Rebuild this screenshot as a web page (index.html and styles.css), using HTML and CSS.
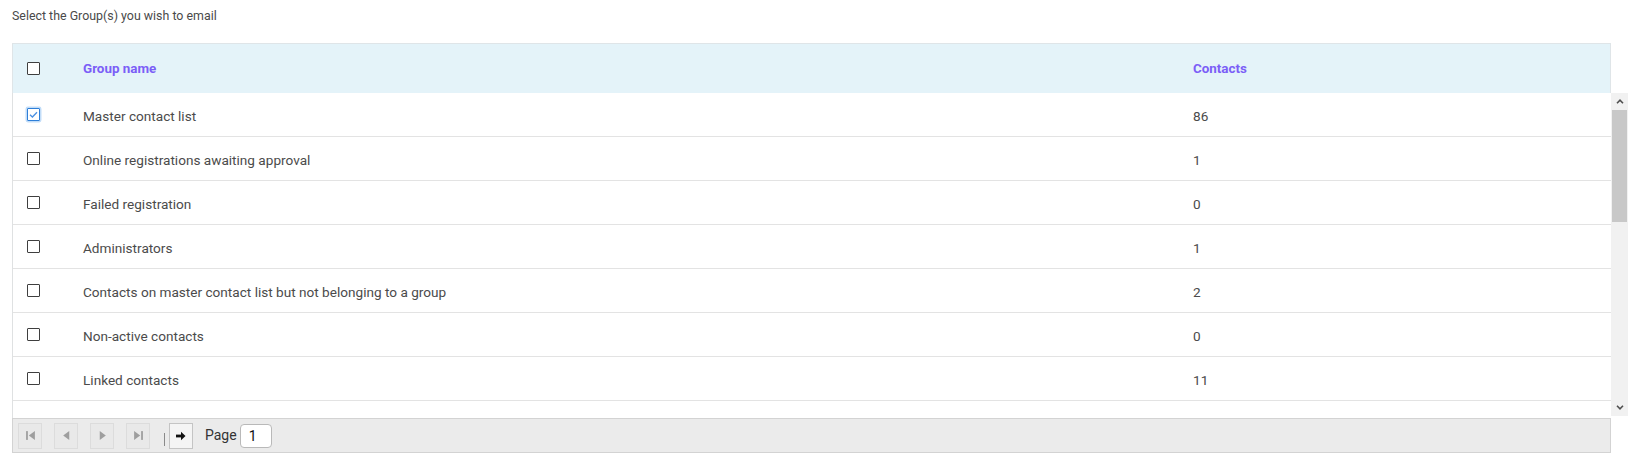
FILE: index.html
```html
<!DOCTYPE html>
<html>
<head>
<meta charset="utf-8">
<link rel="stylesheet" href="styles.css">
</head>
<body>
<div class="page">
  <div class="title">Select the Group(s) you wish to email</div>
  <div class="grid">
    <div class="grid-header">
      <div class="cell cb-cell"><span class="cb"></span></div>
      <div class="cell th">Group name</div>
      <div class="cell th">Contacts</div>
    </div>
    <div class="grid-body">
      <div class="rows">
        <div class="row"><div class="cell cb-cell"><span class="cb checked"><svg viewBox="0 0 13 13" width="13" height="13"><path d="M3 6.8 L5.4 9 L10 4.2" fill="none" stroke="#4a90e2" stroke-width="1.3"/></svg></span></div><div class="cell">Master contact list</div><div class="cell">86</div></div>
        <div class="row"><div class="cell cb-cell"><span class="cb"></span></div><div class="cell">Online registrations awaiting approval</div><div class="cell">1</div></div>
        <div class="row"><div class="cell cb-cell"><span class="cb"></span></div><div class="cell">Failed registration</div><div class="cell">0</div></div>
        <div class="row"><div class="cell cb-cell"><span class="cb"></span></div><div class="cell">Administrators</div><div class="cell">1</div></div>
        <div class="row"><div class="cell cb-cell"><span class="cb"></span></div><div class="cell">Contacts on master contact list but not belonging to a group</div><div class="cell">2</div></div>
        <div class="row"><div class="cell cb-cell"><span class="cb"></span></div><div class="cell">Non-active contacts</div><div class="cell">0</div></div>
        <div class="row"><div class="cell cb-cell"><span class="cb"></span></div><div class="cell">Linked contacts</div><div class="cell">11</div></div>
      </div>
      <div class="vscroll">
        <div class="sb-btn"><svg viewBox="0 0 8 5" width="8" height="5"><path d="M1 4.2 L4 1.2 L7 4.2" fill="none" stroke="#505050" stroke-width="1.6"/></svg></div>
        <div class="sb-track"><div class="sb-thumb"></div></div>
        <div class="sb-btn"><svg viewBox="0 0 8 5" width="8" height="5"><path d="M1 0.8 L4 3.8 L7 0.8" fill="none" stroke="#505050" stroke-width="1.6"/></svg></div>
      </div>
    </div>
    <div class="pager">
      <span class="pbtn disabled"><svg viewBox="0 0 10 10" width="11" height="11"><rect x="1" y="1" width="1.6" height="8" fill="#9e9e9e"/><path d="M9 1 L3.5 5 L9 9 Z" fill="#9e9e9e"/></svg></span>
      <span class="pbtn disabled"><svg viewBox="0 0 10 10" width="11" height="11"><path d="M7.5 1 L2 5 L7.5 9 Z" fill="#9e9e9e"/></svg></span>
      <span class="pbtn disabled"><svg viewBox="0 0 10 10" width="11" height="11"><path d="M2.5 1 L8 5 L2.5 9 Z" fill="#9e9e9e"/></svg></span>
      <span class="pbtn disabled"><svg viewBox="0 0 10 10" width="11" height="11"><path d="M1 1 L6.5 5 L1 9 Z" fill="#9e9e9e"/><rect x="7.4" y="1" width="1.6" height="8" fill="#9e9e9e"/></svg></span>
      <span class="psep"></span>
      <span class="pbtn go"><svg viewBox="0 0 12 10" width="12" height="10"><rect x="1" y="3.6" width="5.5" height="2.8" fill="#111"/><path d="M6 0.8 L10.5 5 L6 9.2 Z" fill="#111"/></svg></span>
      <span class="plabel">Page</span>
      <span class="pinput">1</span>
    </div>
  </div>
</div>
</body>
</html>
```

FILE: styles.css
```css
html, body {
  margin: 0;
  padding: 0;
  background: #ffffff;
}

.page {
  padding: 8px 12px 0 12px;
  font-family: Roboto, "Liberation Sans", sans-serif;
  color: #4a4a4a;
}

.title {
  font-size: 12.4px;
  line-height: 16px;
  height: 16px;
  margin-bottom: 19px;
  color: #4a4a4a;
}

.grid {
  width: 1616px;
}

.grid-header {
  width: 1599px;
  box-sizing: border-box;
  height: 50px;
  background: #e4f3f9;
  border: 1px solid #dfe5e8;
  border-bottom: none;
  display: grid;
  grid-template-columns: 70px 1110px 1fr;
  align-items: center;
}

.cell {
  font-size: 13.6px;
  line-height: 18px;
  white-space: nowrap;
}

.row .cell {
  padding-top: 2px;
}

.row .cb-cell {
  padding-top: 0;
}

.cb-cell {
  padding-left: 14px;
  display: flex;
  align-items: center;
}

.th {
  font-weight: 700;
  font-size: 13.4px;
  color: #7b5ef7;
}

.cb {
  display: inline-block;
  width: 13px;
  height: 13px;
  box-sizing: border-box;
  border: 1px solid #3f3f3f;
  border-radius: 1px;
  background: #fff;
  position: relative;
}

.cb.checked {
  border-color: #2f7fd8;
  box-shadow: 0 0 0 1.5px rgba(120, 180, 240, 0.45);
}

.cb.checked svg {
  position: absolute;
  left: -1px;
  top: -1px;
}

.grid-body {
  display: flex;
  height: 325px;
}

.rows {
  width: 1599px;
  box-sizing: border-box;
  border-left: 1px solid #dfe1e2;
}

.row {
  height: 44px;
  box-sizing: border-box;
  border-bottom: 1px solid #e3e3e3;
  display: grid;
  grid-template-columns: 70px 1110px 1fr;
  align-items: center;
  color: #4b4b4b;
}

.vscroll {
  width: 17px;
  height: 323px;
  background: #f1f1f1;
  display: flex;
  flex-direction: column;
}

.sb-btn {
  height: 17px;
  display: flex;
  align-items: center;
  justify-content: center;
}

.sb-track {
  flex: 1;
  display: flex;
  flex-direction: column;
}

.sb-thumb {
  height: 112px;
  margin: 0 1px;
  background: #c8c8c8;
}

.pager {
  width: 1599px;
  height: 35px;
  box-sizing: border-box;
  background: #ebebeb;
  border: 1px solid #d3d3d3;
  display: flex;
  align-items: center;
  padding-left: 5px;
  font-family: Roboto, "Liberation Sans", sans-serif;
}

.pbtn {
  width: 24px;
  height: 26px;
  box-sizing: border-box;
  border: 1px solid #dcdcdc;
  display: flex;
  align-items: center;
  justify-content: center;
  margin-right: 12px;
}

.pbtn.disabled {
  background: #e9e9e9;
}

.psep {
  width: 1px;
  height: 13px;
  background: #8a8a8a;
  margin: 8px 4px 0 2px;
}

.pbtn.go {
  background: #f4f4f4;
  border-color: #c4c4c4;
}

.plabel {
  font-size: 14px;
  color: #333;
  margin-left: 0;
  margin-right: 3px;
  position: relative;
  top: -1px;
}

.pinput {
  width: 32px;
  height: 24px;
  box-sizing: border-box;
  background: #fff;
  border: 1px solid #b9b9b9;
  border-radius: 4px;
  font-size: 14px;
  line-height: 22px;
  padding-left: 8px;
  color: #111;
}
```
